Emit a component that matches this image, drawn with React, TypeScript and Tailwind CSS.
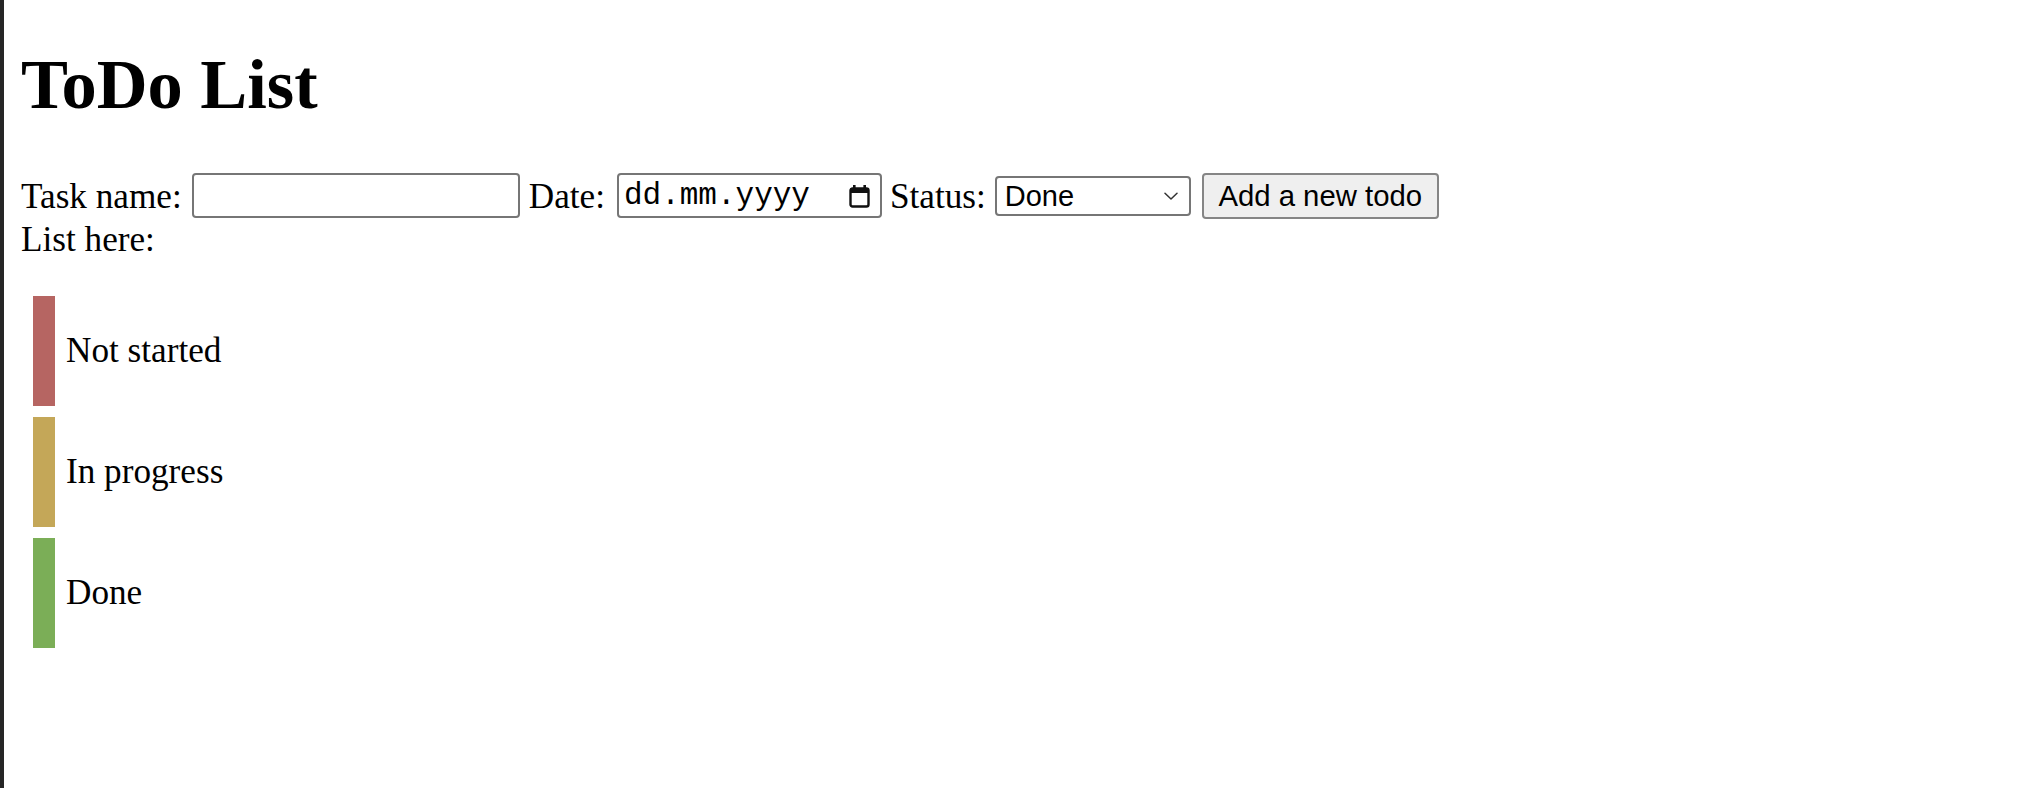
import { useState } from "react";

// ---------------------------------------------------------------------------
// Constants
// ---------------------------------------------------------------------------

const TODOS = [
  { id: 1, label: "Not started", color: "bg-[#b66562]" },
  { id: 2, label: "In progress", color: "bg-[#c4a758]" },
  { id: 3, label: "Done", color: "bg-[#7bae57]" },
] as const;

function CalendarIcon() {
  return (
    <svg width="23" height="24" viewBox="0 0 23 24" fill="none" className="shrink-0">
      <rect x="2.5" y="4.5" width="18" height="18" rx="2" stroke="#111" strokeWidth="2.4" />
      <rect x="2.5" y="4" width="18" height="5" fill="#111" />
      <rect x="5" y="1" width="2.6" height="4" fill="#111" />
      <rect x="15.4" y="1" width="2.6" height="4" fill="#111" />
    </svg>
  );
}

function ChevronDown() {
  return (
    <svg width="14" height="8" viewBox="0 0 14 8" fill="none">
      <path d="M1 1.2l6 5.8 6-5.8" stroke="#333" strokeWidth="1.5" strokeLinecap="round" strokeLinejoin="round" />
    </svg>
  );
}

// ---------------------------------------------------------------------------
// App
// ---------------------------------------------------------------------------

export default function App() {
  const [taskName, setTaskName] = useState("");
  const [date, setDate] = useState("");
  const [status, setStatus] = useState("done");

  return (
    <div className="flex min-h-screen bg-white text-black">
      {/* window edge */}
      <div className="w-[4px] shrink-0 bg-[#262626]" />

      <div className="flex-1 pl-[17px] font-['Liberation_Serif',serif] text-[35.2px] leading-[40px]">
        <h1 className="mt-[44px] mb-[49px] text-[70.4px] font-bold leading-[80px]">ToDo List</h1>

        {/* Form row */}
        <div className="flex h-[45px] items-center whitespace-nowrap">
          <span className="pt-[2px]">Task name:</span>
          <input
            value={taskName}
            onChange={(e) => setTaskName(e.target.value)}
            className="ml-[10px] h-[45px] w-[328px] rounded-[4px] border-2 border-[#767676] bg-white px-[5px] font-['Liberation_Sans',sans-serif] text-[29px] outline-none"
          />
          <span className="ml-[9px] pt-[2px]">Date:</span>
          <label className="ml-[12px] flex h-[45px] w-[265px] items-center rounded-[4px] border-2 border-[#767676] bg-white pl-[5px] pr-[9px]">
            <input
              value={date}
              onChange={(e) => setDate(e.target.value)}
              placeholder="dd.mm.yyyy"
              className="w-0 flex-1 bg-transparent font-['Liberation_Mono',monospace] text-[31px] outline-none placeholder:text-black"
            />
            <CalendarIcon />
          </label>
          <span className="ml-[8px] pt-[2px]">Status:</span>
          <div className="relative ml-[9px]">
            <select
              value={status}
              onChange={(e) => setStatus(e.target.value)}
              className="h-[40px] w-[196px] appearance-none rounded-[4px] border-2 border-[#767676] bg-white pl-[8px] font-['Liberation_Sans',sans-serif] text-[29px] leading-[36px] outline-none"
            >
              <option value="not-started">Not started</option>
              <option value="in-progress">In progress</option>
              <option value="done">Done</option>
            </select>
            <span className="pointer-events-none absolute right-[13px] top-1/2 flex -translate-y-1/2">
              <ChevronDown />
            </span>
          </div>
          <button className="ml-[11px] h-[46px] w-[237px] rounded-[4px] border-2 border-[#858585] bg-[#efefef] font-['Liberation_Sans',sans-serif] text-[29.3px] leading-[40px]">
            Add a new todo
          </button>
        </div>

        <div className="mt-[2px]">List here:</div>

        {/* List */}
        <div className="mt-[36px] ml-[12px] flex flex-col gap-[11px]">
          {TODOS.map((todo) => (
            <div key={todo.id} className="flex h-[110px] items-center gap-[11px]">
              <div className={`h-full w-[22px] ${todo.color}`} />
              <span>{todo.label}</span>
            </div>
          ))}
        </div>
      </div>
    </div>
  );
}
